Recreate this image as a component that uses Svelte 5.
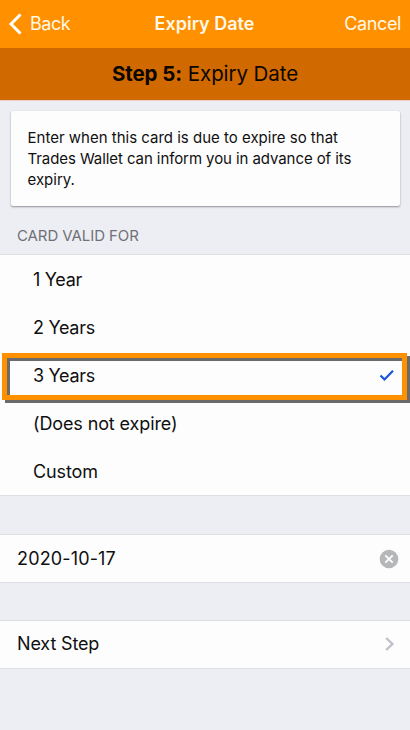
<script>
  const options = ['1 Year', '2 Years', '3 Years', '(Does not expire)', 'Custom'];
  let selected = $state('3 Years');
</script>

<div class="screen">
  <header>
    <button class="back">
      <svg width="14" height="22" viewBox="0 0 14 22"><path d="M12.5 1.5 3 11 12.5 20.5" fill="none" stroke="#fff" stroke-width="3" /></svg>
      <span>Back</span>
    </button>
    <h1>Expiry Date</h1>
    <button class="cancel">Cancel</button>
  </header>

  <div class="step"><span><b>Step 5:</b> Expiry Date</span></div>

  <p class="card">Enter when this card is due to expire so that<br /><span class="tight">Trades Wallet can inform you in advance of its</span><br />expiry.</p>

  <h2>CARD VALID FOR</h2>

  <div class="options">
    {#each options as option}
      <button class="option" class:years={option.includes('Year')} onclick={() => (selected = option)}>
        <span>{option}</span>
        {#if option === selected}
          <svg width="16" height="13" viewBox="0 0 16 13"><path d="M1.5 6.5 5.5 10.5 14 1.8" fill="none" stroke="#1553dc" stroke-width="2.2" /></svg>
          <i class="frame"></i>
        {/if}
      </button>
    {/each}
  </div>

  <div class="row date">
    <span>2020-10-17</span>
    <svg width="20" height="20" viewBox="0 0 20 20"><circle cx="10" cy="10" r="9.3" fill="#b5b7b8" /><path d="M6.3 6.3 13.7 13.7M13.7 6.3 6.3 13.7" stroke="#fff" stroke-width="1.9" /></svg>
  </div>

  <div class="row next">
    <span>Next Step</span>
    <svg width="10" height="16" viewBox="0 0 10 16"><path d="M1.2 2 7.4 8 1.2 14" fill="none" stroke="#c0c0c8" stroke-width="2.4" /></svg>
  </div>
</div>

<style>
  :global(body) { margin: 0; }
  .screen {
    width: 410px;
    height: 730px;
    box-sizing: border-box;
    overflow: hidden;
    background: #edeef4;
    color: #101010;
    font-family: Inter, "Liberation Sans", sans-serif;
    font-size: 18px;
  }
  button {
    border: 0;
    padding: 0;
    background: none;
    font: inherit;
    color: inherit;
    text-align: left;
  }
  h1, h2, p { margin: 0; }
  header {
    display: grid;
    grid-template-columns: 1fr auto 1fr;
    align-items: center;
    height: 48px;
    padding: 0 9px 1px 8px;
    box-sizing: border-box;
    background: #ff9000;
    color: #fff8e8;
  }
  .back { display: flex; align-items: center; gap: 8px; letter-spacing: -0.5px; }
  h1 { font-size: 18px; font-weight: 600; letter-spacing: 0; }
  .cancel { justify-self: end; letter-spacing: -0.4px; }
  .step {
    display: flex;
    align-items: center;
    justify-content: center;
    height: 52px;
    box-sizing: border-box;
    background: #cf6900;
    color: #0c0600;
    font-size: 20.5px;
    letter-spacing: -0.07px;
    border-bottom: 1px solid #c86a10;
  }
  .card {
    height: 95px;
    margin: 11px 10.5px 0 11px;
    padding: 16px 16.5px;
    box-sizing: border-box;
    border-radius: 2px;
    background: #fdfdfe;
    box-shadow: 0 1px 2px rgba(0, 0, 0, 0.4);
    font-size: 15px;
    line-height: 21px;
    white-space: nowrap;
  }
  .step { box-shadow: 0 1px #f6cfc4; }
  .tight { letter-spacing: -0.08px; }
  h2 {
    height: 48px;
    padding: 20px 17px 0;
    box-sizing: border-box;
    color: #707176;
    font-size: 15px;
    line-height: 20px;
    font-weight: 400;
    letter-spacing: -0.08px;
    white-space: nowrap;
  }
  .options {
    display: flex;
    flex-direction: column;
    height: 242px;
    box-sizing: border-box;
    border-top: 1px solid #dedfe4;
    border-bottom: 1px solid #dedfe4;
    background: #fdfdfe;
  }
  .option {
    position: relative;
    display: flex;
    flex: 1;
    align-items: center;
    justify-content: space-between;
    padding: 0 15px 0 33px;
    letter-spacing: -0.12px;
  }
  .years { letter-spacing: -0.3px; }
  .frame {
    position: absolute;
    inset: 1.6px 3px auto 2px;
    height: 37px;
    border: 5px solid #ff9100;
    filter: drop-shadow(3px 3px 0.7px #6b6b6b);
  }
  .row {
    display: flex;
    align-items: center;
    justify-content: space-between;
    height: 49px;
    box-sizing: border-box;
    padding: 0 11px 0 17px;
    border-top: 1px solid #dedfe4;
    border-bottom: 1px solid #dedfe4;
    background: #fdfdfe;
  }
  .date { margin-top: 38px; letter-spacing: 0.15px; }
  .next { margin-top: 37px; padding: 0 15px 2px 17px; letter-spacing: -0.15px; }
</style>
